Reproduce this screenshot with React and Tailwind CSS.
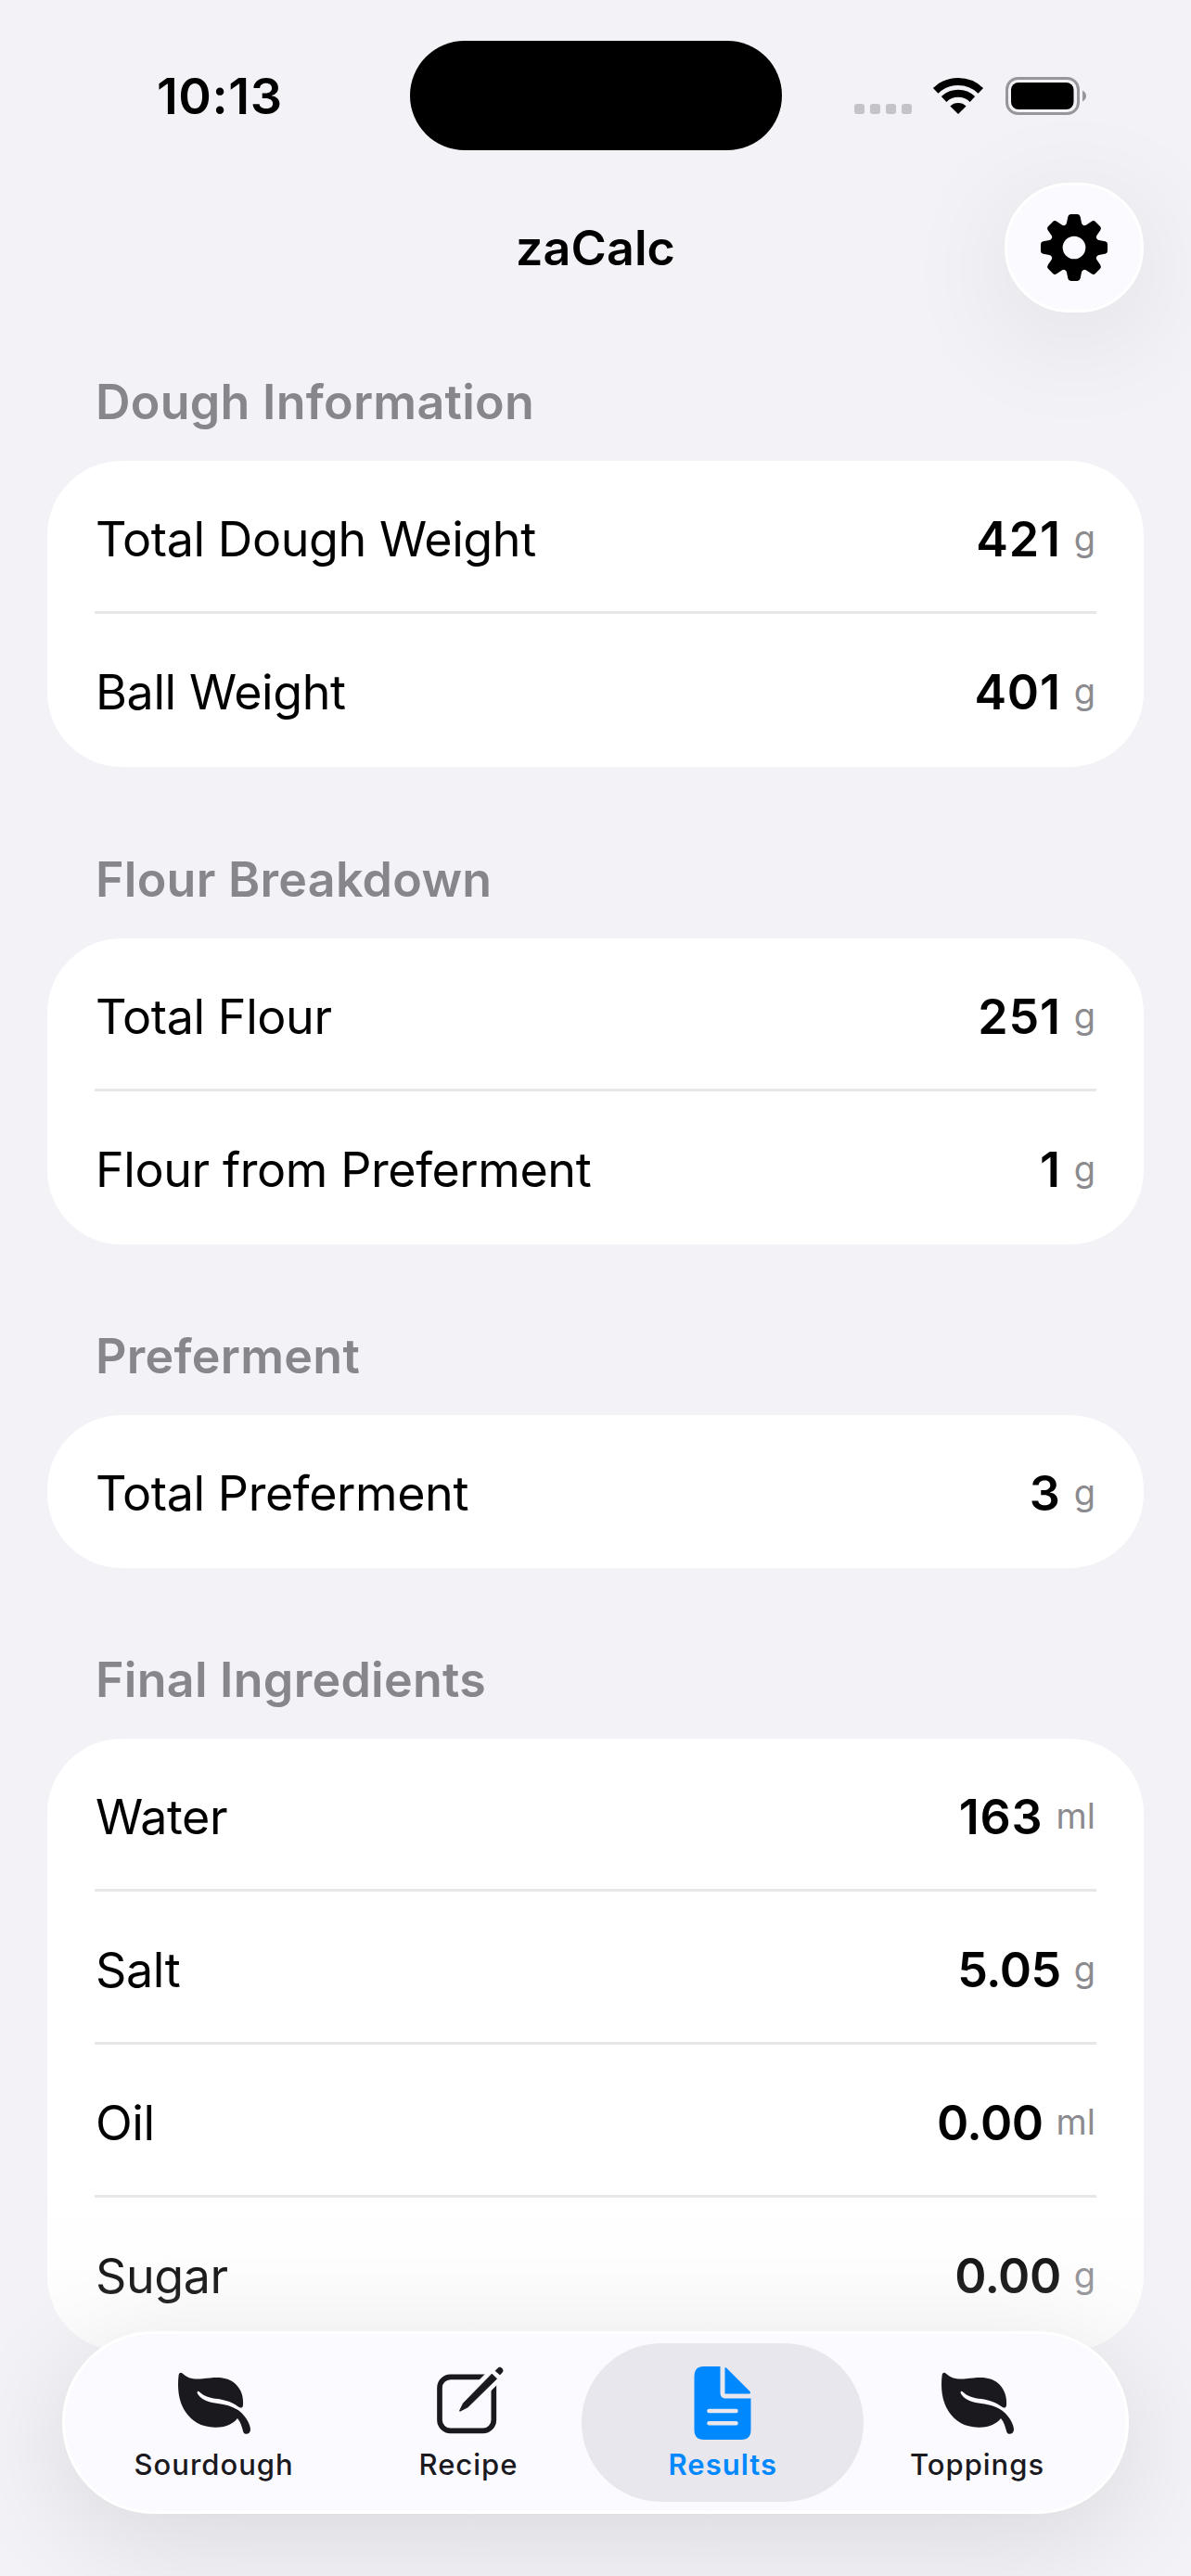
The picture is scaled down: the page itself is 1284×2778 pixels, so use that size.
const sections = [
  {
    title: "Dough Information",
    header: "h-[85px]",
    rows: [
      ["Total Dough Weight", "421", "g"],
      ["Ball Weight", "401", "g"],
    ],
  },
  {
    title: "Flour Breakdown",
    header: "h-[185px]",
    rows: [
      ["Total Flour", "251", "g"],
      ["Flour from Preferment", "1", "g"],
    ],
  },
  {
    title: "Preferment",
    header: "h-[184px]",
    rows: [["Total Preferment", "3", "g"]],
  },
  {
    title: "Final Ingredients",
    header: "h-[184px]",
    rows: [
      ["Water", "163", "ml"],
      ["Salt", "5.05", "g"],
      ["Oil", "0.00", "ml"],
      ["Sugar", "0.00", "g"],
    ],
  },
];

function WifiIcon() {
  return (
    <svg className="h-[40px] w-[56px]" viewBox="-28 -40 56 40" fill="none" stroke="#000">
      <path d="M-24.3 -25.2A35 35 0 0 1 24.3 -25.2" strokeWidth="8" />
      <path d="M-15.4 -16A22.2 22.2 0 0 1 15.4 -16" strokeWidth="8" />
      <path d="M0 0L-8.6 -8.6A12.5 12.5 0 0 1 8.6 -8.6Z" fill="#000" stroke="none" />
    </svg>
  );
}

function BatteryIcon() {
  return (
    <svg className="h-[41px] w-[88px]" viewBox="0 0 88 41">
      <rect x="1.5" y="1.5" width="77" height="38" rx="12" fill="none" stroke="#97979b" strokeWidth="3" />
      <rect x="6" y="6" width="67.5" height="29" rx="8" fill="#000" />
      <path d="M83 14.5Q87 17 87 20.5T83 26.5Z" fill="#97979b" />
    </svg>
  );
}

function GearIcon() {
  return (
    <svg className="h-[74px] w-[74px]" viewBox="-111 -111 222 222">
      {[0, 45, 90, 135, 180, 225, 270, 315].map((angle) => (
        <path
          key={angle}
          transform={`rotate(${angle})`}
          d="M-30 -72Q-25 -74 -24 -80L-20 -100Q-18 -108 -11 -108H11Q18 -108 20 -100L24 -80Q25 -74 30 -72Z"
        />
      ))}
      <circle r="57.5" fill="none" stroke="#000" strokeWidth="41" />
    </svg>
  );
}

function LeafIcon() {
  return (
    <svg className="h-[100px] w-[100px]" viewBox="0 0 300 300" fill="#1a191e">
      <path d="M38 60C40 52 46 51 51 56C65 70 85 76 115 73C160 66 190 66 215 84C240 104 248 130 246 158C245 168 238 169 230 163C213 149 190 142 165 138C140 135 120 130 106 116C100 110 95 116 100 123C115 145 140 150 165 153C195 157 218 164 240 182C256 197 270 220 270 238C269 253 252 256 247 245C242 228 238 212 228 201C215 217 193 231 155 230C110 229 80 210 60 180C40 150 32 110 38 60Z" />
    </svg>
  );
}

function ComposeIcon() {
  return (
    <svg className="ml-[10px] h-[100px] w-[100px]" viewBox="0 0 300 300">
      <path
        d="M196 67H80A35 35 0 0 0 45 102V206A35 35 0 0 0 80 241H185A35 35 0 0 0 220 206V90"
        fill="none"
        stroke="#1a191e"
        strokeWidth="17"
      />
      <path d="M160 126L255 31" stroke="#fafaff" strokeWidth="52" />
      <path
        d="M110 175L121 152L214 57L230 73L136 165L113 177Q108 179 110 175ZM225 47L234 38Q240 33 246 39Q252 46 248 51L240 60Z"
        fill="#1a191e"
        stroke="#1a191e"
        strokeWidth="2"
      />
    </svg>
  );
}

function DocumentIcon() {
  return (
    <svg className="h-[100px] w-[100px]" viewBox="-19.5 -11 100 100">
      <path d="M10 0H28V28.500Q28 34.500 34 34.500H61V68Q61 79 51 79H10Q0 79 0 68V11Q0 0 10 0Z" fill="#0088ff" />
      <path d="M33 2.500Q33 0 35 2L60 27Q61.500 29.500 59 29.500H33Z" fill="#0088ff" />
      <path d="M16 48H45M16 61.300H45" stroke="#e8e7ed" strokeWidth="4.600" strokeLinecap="round" />
    </svg>
  );
}

const tabs = [
  { label: "Sourdough", Icon: LeafIcon },
  { label: "Recipe", Icon: ComposeIcon },
  { label: "Results", Icon: DocumentIcon, active: true },
  { label: "Toppings", Icon: LeafIcon },
];

function StatusBar() {
  return (
    <header className="flex h-[197px] items-start">
      <div className="w-[442px] pt-[71px] pl-[169px] text-[54px] leading-[66px] font-semibold tracking-[0.01em]">
        10:13
      </div>
      <div className="mt-[44px] h-[118px] w-[401px] rounded-[62px] bg-black" />
      <div className="mt-[83px] ml-[78px] flex items-start">
        <div className="mt-[29px] flex gap-[6px]">
          {[0, 1, 2, 3].map((dot) => (
            <span key={dot} className="size-[11px] rounded-[3px] bg-[#c3c3c8]" />
          ))}
        </div>
        <div className="ml-[22px]">
          <WifiIcon />
        </div>
        <div className="ml-[23px]">
          <BatteryIcon />
        </div>
      </div>
    </header>
  );
}

function Row({ label, value, unit, last }) {
  return (
    <div
      className={
        "flex h-[165px] items-center justify-between pt-[4px] " +
        (last ? "" : "shadow-[inset_0_-3px_0_#e7e7e7]")
      }
    >
      <span className="pl-px text-[52px] tracking-[-0.008em]">{label}</span>
      <span className="flex items-center gap-[14px] pr-px">
        <span
          className={
            "text-[52px] font-semibold " + (value.includes(".") ? "tracking-[-0.01em]" : "tracking-[0.015em]")
          }
        >
          {value}
        </span>
        <span className="mt-[-3px] text-[38px] text-[#8b8b8f]">{unit}</span>
      </span>
    </div>
  );
}

export default function App() {
  return (
    <div className="relative h-[2778px] w-[1284px] overflow-hidden bg-[#f2f2f7] font-['Inter',sans-serif] text-black">
      <StatusBar />
      <div className="grid h-[215px] grid-cols-3 items-start px-[51px]">
        <h1 className="col-start-2 pt-[38px] text-center text-[52px] leading-[66px] font-semibold tracking-[0.002em]">
          zaCalc
        </h1>
        <button className="flex h-[140px] w-[150px] items-center justify-center justify-self-end rounded-[72px] border-[3px] border-white bg-[#fafaff] shadow-[0_24px_130px_rgba(0,0,0,0.09)]">
          <GearIcon />
        </button>
      </div>

      <main className="px-[51px]">
        {sections.map(({ title, header, rows }) => (
          <section key={title}>
            <h2
              className={
                "flex items-end pb-[30px] pl-[52px] text-[52px] leading-[66px] font-semibold tracking-[0.005em] text-[#87868b] " +
                header
              }
            >
              {title}
            </h2>
            <div className="rounded-[80px] bg-white px-[51px]">
              {rows.map(([label, value, unit], i) => (
                <Row key={label} label={label} value={value} unit={unit} last={i === rows.length - 1} />
              ))}
            </div>
          </section>
        ))}
      </main>

      <div className="absolute inset-x-0 bottom-0 h-[408px] bg-linear-to-b from-[#f2f2f7]/0 to-[#f2f2f7]/60" />
      <nav className="absolute top-[2514px] left-[67px] flex h-[197px] w-[1150px] rounded-[98px] border-[3px] border-white bg-[#fafaff] pt-[10px] pl-[23px] shadow-[0_24px_120px_rgba(0,0,0,0.11)]">
        {tabs.map(({ label, Icon, active }) => (
          <div key={label} className="flex w-[274.3px] shrink-0 justify-center">
            <div
              className={
                "flex h-[171px] w-[304px] shrink-0 flex-col items-center pt-[14px] " +
                (active ? "rounded-[86px] bg-[#e8e7ed] font-semibold text-[#0088ff]" : "font-medium text-[#1a191e]")
              }
            >
              <Icon />
              <span className="mt-[-1px] pl-px text-[31px] leading-[36px] tracking-[0.032em]">{label}</span>
            </div>
          </div>
        ))}
      </nav>
    </div>
  );
}
